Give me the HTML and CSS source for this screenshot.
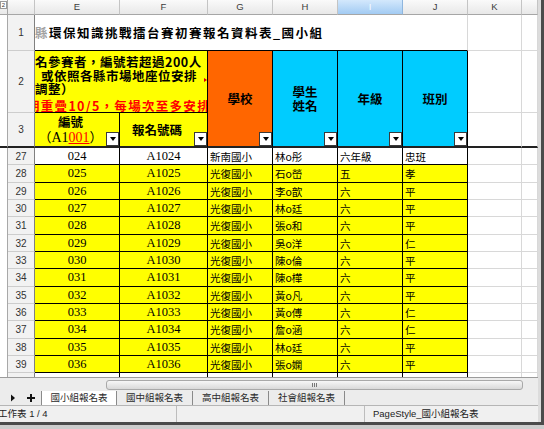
FILE: index.html
```html
<!DOCTYPE html>
<html lang="zh-Hant">
<head>
<meta charset="utf-8">
<title>國小組報名表</title>
<link rel="stylesheet" href="styles.css">
</head>
<body>
<div class="window">
  <div class="sheet">
    <div class="corner"><span class="lvl">2</span></div>
    <div class="ch"></div>
    <div class="ch">E</div>
    <div class="ch">F</div>
    <div class="ch">G</div>
    <div class="ch">H</div>
    <div class="ch sel">I</div>
    <div class="ch">J</div>
    <div class="ch">K</div>
    <div class="ch"></div>

    <div class="strip top"></div>
    <div class="rh">1</div>
    <div class="title"><span class="fade">縣</span>環保知識挑戰擂台賽初賽報名資料表_國小組</div>
    <div class="gc"></div>
    <div class="gc"></div>

    <div class="rh">2</div>
    <div class="note">
      <div class="nl">名參賽者，編號若超過200人</div>
      <div class="nl l2">或依照各縣市場地座位安排</div>
      <div class="nl">調整）</div>
      <div class="nl red">期重疊10/5，每場次至多安排</div>
      <span class="clipmark"></span>
    </div>
    <div class="hd org">學校<span class="dd"></span></div>
    <div class="hd cy">學生<br>姓名<span class="dd"></span></div>
    <div class="hd cy">年級<span class="dd"></span></div>
    <div class="hd cy">班別<span class="dd"></span></div>
    <div class="gc"></div>
    <div class="gc"></div>

    <div class="rh fz">3</div>
    <div class="yh"><div>編號<br><span class="par">（</span><span class="lat">A1<u class="redu">001</u></span><span class="par">）</span></div><span class="dd"></span></div>
    <div class="yh">報名號碼<span class="dd"></span></div>
    <div class="gc fz"></div>
    <div class="gc fz"></div>

    <div class="strip bot"></div>
    <div class="rh">27</div><div class="d n w">024</div><div class="d n w">A1024</div><div class="d t w">新南國小</div><div class="d t w">林o彤</div><div class="d t w">六年級</div><div class="d t w">忠班</div><div class="gc"></div><div class="gc"></div>
    <div class="rh">28</div><div class="d n">025</div><div class="d n">A1025</div><div class="d t">光復國小</div><div class="d t">石o嵤</div><div class="d t">五</div><div class="d t">孝</div><div class="gc"></div><div class="gc"></div>
    <div class="rh">29</div><div class="d n">026</div><div class="d n">A1026</div><div class="d t">光復國小</div><div class="d t">李o歆</div><div class="d t">六</div><div class="d t">平</div><div class="gc"></div><div class="gc"></div>
    <div class="rh">30</div><div class="d n">027</div><div class="d n">A1027</div><div class="d t">光復國小</div><div class="d t">林o廷</div><div class="d t">六</div><div class="d t">平</div><div class="gc"></div><div class="gc"></div>
    <div class="rh">31</div><div class="d n">028</div><div class="d n">A1028</div><div class="d t">光復國小</div><div class="d t">張o和</div><div class="d t">六</div><div class="d t">平</div><div class="gc"></div><div class="gc"></div>
    <div class="rh">32</div><div class="d n">029</div><div class="d n">A1029</div><div class="d t">光復國小</div><div class="d t">吳o洋</div><div class="d t">六</div><div class="d t">仁</div><div class="gc"></div><div class="gc"></div>
    <div class="rh">33</div><div class="d n">030</div><div class="d n">A1030</div><div class="d t">光復國小</div><div class="d t">陳o倫</div><div class="d t">六</div><div class="d t">平</div><div class="gc"></div><div class="gc"></div>
    <div class="rh">34</div><div class="d n">031</div><div class="d n">A1031</div><div class="d t">光復國小</div><div class="d t">陳o樺</div><div class="d t">六</div><div class="d t">平</div><div class="gc"></div><div class="gc"></div>
    <div class="rh">35</div><div class="d n">032</div><div class="d n">A1032</div><div class="d t">光復國小</div><div class="d t">黃o凡</div><div class="d t">六</div><div class="d t">平</div><div class="gc"></div><div class="gc"></div>
    <div class="rh">36</div><div class="d n">033</div><div class="d n">A1033</div><div class="d t">光復國小</div><div class="d t">黃o傅</div><div class="d t">六</div><div class="d t">仁</div><div class="gc"></div><div class="gc"></div>
    <div class="rh">37</div><div class="d n">034</div><div class="d n">A1034</div><div class="d t">光復國小</div><div class="d t">詹o涵</div><div class="d t">六</div><div class="d t">仁</div><div class="gc"></div><div class="gc"></div>
    <div class="rh">38</div><div class="d n">035</div><div class="d n">A1035</div><div class="d t">光復國小</div><div class="d t">林o廷</div><div class="d t">六</div><div class="d t">平</div><div class="gc"></div><div class="gc"></div>
    <div class="rh">39</div><div class="d n">036</div><div class="d n">A1036</div><div class="d t">光復國小</div><div class="d t">張o嫻</div><div class="d t">六</div><div class="d t">平</div><div class="gc"></div><div class="gc"></div>
    <div class="rh">40</div><div class="d n w">037</div><div class="d n w">A1037</div><div class="d t w">光復國小</div><div class="d t w">林o宏</div><div class="d t w">六</div><div class="d t w">平</div><div class="gc"></div><div class="gc"></div>
  </div>

  <div class="hbar">
    <div class="thumb"><span class="grip"></span></div>
  </div>

  <div class="tabs">
    <div class="nav">
      <svg width="6" height="8" viewBox="0 0 6 8"><path d="M1 0.5 L5 4 L1 7.5 Z" fill="#111"/></svg>
      <svg width="8" height="8" viewBox="0 0 8 8"><path d="M3 0 H5 V3 H8 V5 H5 V8 H3 V5 H0 V3 H3 Z" fill="#111"/></svg>
    </div>
    <div class="tab active">國小組報名表</div>
    <div class="tab">國中組報名表</div>
    <div class="tab">高中組報名表</div>
    <div class="tab">社會組報名表</div>
  </div>

  <div class="status">
    <div class="sec s1">工作表 1 / 4</div>
    <div class="sec s2"></div>
    <div class="sec s3">PageStyle_國小組報名表</div>
  </div>
</div>
</body>
</html>
```

FILE: styles.css
```css
* { box-sizing: border-box; margin: 0; padding: 0; }
html, body { width: 544px; height: 429px; overflow: hidden; }
body {
  background: #cdcdcd;
  font-family: "Liberation Sans", "Noto Sans CJK TC", sans-serif;
  color: #000;
}
.window {
  width: 544px;
  height: 425px;
  border-right: 3px solid #4b4b4b;
  border-bottom: 3px solid #4b4b4b;
  padding-right: 3px;
  background: #dcdcdc;
  display: flex;
  flex-direction: column;
}

/* ---------- sheet grid ---------- */
.sheet {
  height: 378px;
  overflow: hidden;
  background: #fff;
  border-bottom: 1px solid #9c9c9c;
  display: grid;
  grid-template-columns: 8px 27px 85px 88px 65px 65px 65px 65px 54px 16px;
  grid-template-rows: 15px 36px 62px 35px 17px 18px 17px 17px 18px 17px 17px 18px 17px 17px 18px 17px 17px 17px;
}
.corner {
  background: linear-gradient(#fafafa, #e9e9e9);
  border-bottom: 1px solid #a6a6a6;
  border-right: 1px solid #a6a6a6;
  position: relative;
}
.lvl {
  position: absolute;
  left: 0; top: 1px;
  width: 7px; height: 8px;
  border: 1px solid #9a9a9a;
  font-size: 6px; line-height: 6px;
  text-align: center;
  color: #333;
  background: #fff;
}
.ch {
  background: linear-gradient(#fafafa, #e8e8e8);
  border-right: 1px solid #c4c4c4;
  border-bottom: 1px solid #a6a6a6;
  font-size: 9.5px;
  line-height: 14px;
  text-align: center;
  color: #3c3c3c;
}
.ch.sel {
  background: linear-gradient(#d3e8fc, #a2cbf3);
  color: #f7fbff;
  border-right-color: #8fb6de;
}
.strip { background: #fff; border-right: 1px solid #a8a8a8; }
.strip.top { grid-row: span 3; border-bottom: 2px solid #222; }
.strip.bot { grid-row: span 14; }

.rh {
  background: #f2f2f2;
  border-right: 1px solid #808080;
  border-bottom: 1px solid #cdcdcd;
  font-size: 10px;
  color: #333;
  display: flex;
  align-items: center;
  justify-content: center;
}
.gc { border-right: 1px solid #d8d8d8; border-bottom: 1px solid #d8d8d8; }
.fz { border-bottom: 2px solid #222; }

.title {
  grid-column: span 6;
  border-right: 1px solid #d8d8d8;
  border-bottom: 1px solid #000;
  display: flex;
  align-items: center;
  white-space: nowrap;
  overflow: hidden;
  font-family: "Noto Sans CJK TC", sans-serif;
  font-weight: 700;
  font-size: 12.5px;
  letter-spacing: 1.5px;
}
.fade { color: #a0a0a0; }

.note {
  grid-column: span 2;
  background: #ff0;
  border-right: 1px solid #000;
  border-bottom: 1px solid #000;
  padding-top: 4px;
  overflow: hidden;
  position: relative;
  white-space: nowrap;
  font-family: "Noto Sans CJK TC", sans-serif;
  font-weight: 700;
  font-size: 12.5px;
  letter-spacing: 0.5px;
  line-height: 13.5px;
}
.nl.l2 { padding-left: 6px; }
.nl.red { color: #f00; margin-top: 3px; margin-left: -8px; letter-spacing: 1.3px; }
.clipmark {
  position: absolute;
  right: 0; top: 27px;
  width: 0; height: 0;
  border-top: 2.5px solid transparent;
  border-bottom: 2.5px solid transparent;
  border-left: 3px solid #e00000;
}

.hd {
  grid-row: span 2;
  border-right: 1px solid #000;
  border-bottom: 2px solid #222;
  display: flex;
  align-items: center;
  justify-content: center;
  text-align: center;
  position: relative;
  font-family: "Noto Sans CJK TC", sans-serif;
  font-weight: 700;
  font-size: 12.5px;
  line-height: 14px;
}
.org { background: #ff6600; }
.cy { background: #00ccff; }

.yh {
  background: #ff0;
  border-right: 1px solid #000;
  border-bottom: 2px solid #222;
  padding-right: 13px;
  display: flex;
  align-items: center;
  justify-content: center;
  text-align: center;
  position: relative;
  font-family: "Noto Sans CJK TC", sans-serif;
  font-weight: 700;
  font-size: 12.5px;
  line-height: 15px;
  white-space: nowrap;
}
.par { font-weight: 400; font-size: 13px; }
.lat { font-family: "Liberation Serif", serif; font-weight: 400; font-size: 14px; }
.redu { color: #f00; text-decoration: underline; text-decoration-color: #f00; }

.dd {
  position: absolute;
  right: 0; bottom: 0;
  width: 13px; height: 14px;
  background: #fff;
  border: 1px solid #3a3a3a;
  display: flex;
  align-items: center;
  justify-content: center;
}
.dd::after {
  content: "";
  width: 0; height: 0;
  border-left: 3.5px solid transparent;
  border-right: 3.5px solid transparent;
  border-top: 4px solid #000;
}

.d {
  background: #ff0;
  border-right: 1px solid #000;
  border-bottom: 1px solid #000;
  display: flex;
  align-items: center;
  overflow: hidden;
  white-space: nowrap;
}
.d.w { background: #fff; }
.d.n {
  justify-content: center;
  font-family: "Liberation Serif", serif;
  font-size: 12.5px;
}
.d.t {
  padding-left: 2px;
  font-family: "Noto Sans CJK TC", sans-serif;
  font-size: 10.5px;
}

/* ---------- bottom bars ---------- */
.hbar {
  height: 13px;
  background: #ececec;
  padding: 2px 0 0 106px;
  display: flex;
}
.thumb {
  width: 417px;
  height: 10px;
  border: 1px solid #a9a9a9;
  border-radius: 3px;
  background: linear-gradient(#f7f7f7, #d9d9d9);
  display: flex;
  align-items: center;
  justify-content: center;
}
.grip {
  width: 6px; height: 4px;
  background: repeating-linear-gradient(90deg, #777 0 1px, transparent 1px 2px);
}
.tabs {
  height: 14px;
  background: #ececec;
  display: flex;
}
.nav {
  width: 41px;
  display: flex;
  align-items: center;
  gap: 11px;
  padding-left: 10px;
}
.tab {
  width: 76px;
  border-right: 1px solid #8a8a8a;
  font-family: "Noto Sans CJK TC", sans-serif;
  font-size: 9.5px;
  line-height: 13px;
  text-align: center;
  color: #2a2a2a;
}
.tab.active { background: #fff; border-left: 1px solid #8a8a8a; }
.status {
  height: 17px;
  border-top: 1px solid #b5b5b5;
  background: #f0f0f0;
  display: flex;
  font-family: "Liberation Sans", "Noto Sans CJK TC", sans-serif;
  font-size: 9.5px;
  color: #222;
}
.sec { line-height: 16px; white-space: nowrap; overflow: hidden; }
.s1 { width: 177px; border-right: 1px solid #bdbdbd; text-indent: -2px; }
.s2 { width: 188px; border-right: 1px solid #bdbdbd; }
.s3 { flex: 1; padding-left: 8px; }
```
